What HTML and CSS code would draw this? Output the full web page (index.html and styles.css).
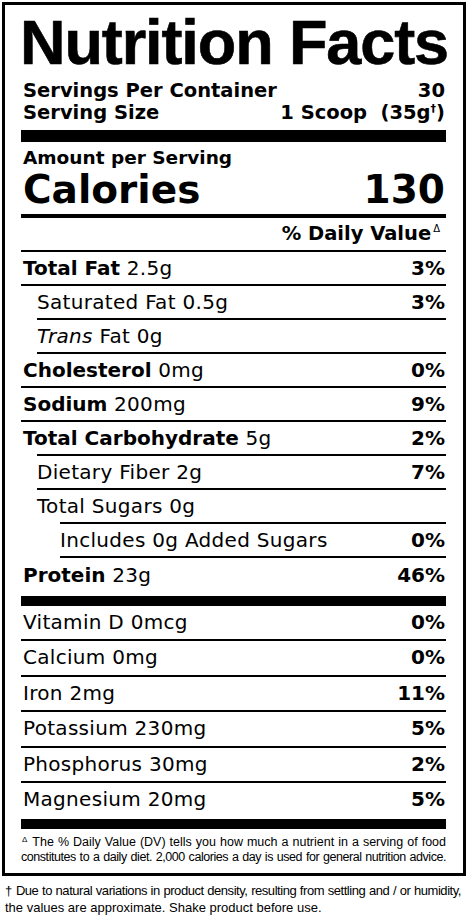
FILE: index.html
```html
<!DOCTYPE html>
<html lang="en">
<head>
  <meta charset="UTF-8">
  <meta name="viewport" content="width=device-width, initial-scale=1.0">
  <title>Nutrition Facts</title>
  <link rel="stylesheet" href="styles.css">
</head>
<body>
  <div class="label">
    <h1 class="title">Nutrition Facts</h1>

    <div class="serving">
      <div class="split"><span>Servings Per Container</span><span>30</span></div>
      <div class="split"><span>Serving Size</span><span>1 Scoop&nbsp;&nbsp;(35g<sup class="mark">†</sup>)</span></div>
    </div>

    <div class="bar bar-heavy"></div>

    <p class="amount">Amount per Serving</p>
    <div class="calories split"><span>Calories</span><span>130</span></div>

    <div class="row dv-head"><span></span><span>% Daily Value<sup class="delta">Δ</sup></span></div>

    <div class="row"><span><b>Total Fat</b> 2.5g</span><b>3%</b></div>
    <div class="row sub rule-in"><span>Saturated Fat 0.5g</span><b>3%</b></div>
    <div class="row sub rule-in"><span><i>Trans</i> Fat 0g</span></div>
    <div class="row"><span><b>Cholesterol</b> 0mg</span><b>0%</b></div>
    <div class="row"><span><b>Sodium</b> 200mg</span><b>9%</b></div>
    <div class="row rule-in"><span><b>Total Carbohydrate</b> 5g</span><b>2%</b></div>
    <div class="row sub rule-in"><span>Dietary Fiber 2g</span><b>7%</b></div>
    <div class="row sub rule-in2"><span>Total Sugars 0g</span></div>
    <div class="row sub2 rule-in2"><span>Includes 0g Added Sugars</span><b>0%</b></div>
    <div class="row row-end"><span><b>Protein</b> 23g</span><b>46%</b></div>

    <div class="bar bar-mid"></div>

    <div class="row mineral"><span>Vitamin D 0mcg</span><b>0%</b></div>
    <div class="row mineral"><span>Calcium 0mg</span><b>0%</b></div>
    <div class="row mineral"><span>Iron 2mg</span><b>11%</b></div>
    <div class="row mineral"><span>Potassium 230mg</span><b>5%</b></div>
    <div class="row mineral"><span>Phosphorus 30mg</span><b>2%</b></div>
    <div class="row mineral mineral-end"><span>Magnesium 20mg</span><b>5%</b></div>

    <div class="bar bar-mid"></div>

    <div class="footnote">
      <div class="fn-line"><sup class="delta">Δ</sup> The % Daily Value (DV) tells you how much a nutrient in a serving of food</div>
      <div class="fn-line fn-tight">constitutes to a daily diet. 2,000 calories a day is used for general nutrition advice.</div>
    </div>
  </div>

  <div class="note">
    <div class="note-first">† Due to natural variations in product density, resulting from settling and / or humidity,</div>
    <div>the values are approximate. Shake product before use.</div>
  </div>
</body>
</html>
```

FILE: styles.css
```css
/* Base */
* {
  margin: 0;
  padding: 0;
  box-sizing: border-box;
}

body {
  width: 469px;
  background: #fff;
  color: #000;
  font-family: "DejaVu Sans", "Liberation Sans", sans-serif;
}

b {
  font-weight: 700;
  letter-spacing: 0;
}

/* Label box */
.label {
  margin: 2px 3px 0 2px;
  border: 3px solid #000;
  padding: 6px 17px 8px 16px;
}

.title {
  margin-left: -1px;
  font-family: "Liberation Sans", Arial, sans-serif;
  font-size: 63px;
  font-weight: 700;
  line-height: 62px;
  letter-spacing: -1.1px;
  white-space: nowrap;
  -webkit-text-stroke: 0.6px #000;
}

.split {
  display: flex;
  justify-content: space-between;
}

.serving {
  margin-top: 6.5px;
  padding: 0 1px 0 2px;
  font-size: 19.5px;
  font-weight: 700;
  line-height: 22px;
}

.mark {
  font-size: 11px;
  line-height: 0;
  vertical-align: 7px;
}

/* Bars */
.bar {
  background: #000;
}

.bar-heavy {
  height: 12px;
  margin-top: 6.5px;
}

.bar-mid {
  height: 10px;
}

/* Calories */
.amount {
  margin-top: 6.4px;
  padding-left: 2px;
  font-size: 18.5px;
  font-weight: 700;
  line-height: 20px;
}

.calories {
  margin-top: 2px;
  padding: 0 1px 3.5px 2px;
  border-bottom: 4px solid #000;
  font-size: 39px;
  font-weight: 700;
  line-height: 40px;
}

/* Nutrient rows */
.row {
  display: flex;
  justify-content: space-between;
  padding: 0 1px 2px 2px;
  font-size: 20px;
  line-height: 32px;
  letter-spacing: 0.3px;
  white-space: nowrap;
  background: linear-gradient(#000, #000) right bottom / 100% 2px no-repeat;
}

.row.rule-in {
  background-size: calc(100% - 16px) 2px;
}

.row.rule-in2 {
  background-size: calc(100% - 39px) 2px;
}

.sub {
  padding-left: 16px;
}

.sub2 {
  padding-left: 39px;
}

.dv-head {
  font-size: 19.5px;
  font-weight: 700;
  letter-spacing: 0;
  padding-right: 6px;
}

.delta {
  font-size: 10px;
  font-weight: 400;
  line-height: 0;
  vertical-align: 8px;
  margin-left: 2px;
}

.row-end {
  background: none;
  line-height: 34px;
  padding-bottom: 4px;
}

.mineral {
  line-height: 33.5px;
}

.mineral-end {
  background: none;
}

/* Footnotes */
.footnote {
  margin-top: 6.4px;
  font-family: "Liberation Sans", Arial, sans-serif;
  font-size: 12.5px;
  line-height: 15px;
}

.fn-line {
  text-align: justify;
  text-align-last: justify;
}

.fn-line .delta {
  font-size: 8px;
  vertical-align: 4px;
  margin: 0 1px 0 1px;
}

.fn-tight {
  letter-spacing: -0.45px;
}

.note {
  padding: 5.6px 8px 0 5px;
  font-family: "Liberation Sans", Arial, sans-serif;
  font-size: 13px;
  line-height: 17px;
}

.note-first {
  letter-spacing: -0.45px;
  text-align: justify;
  text-align-last: justify;
}
```
